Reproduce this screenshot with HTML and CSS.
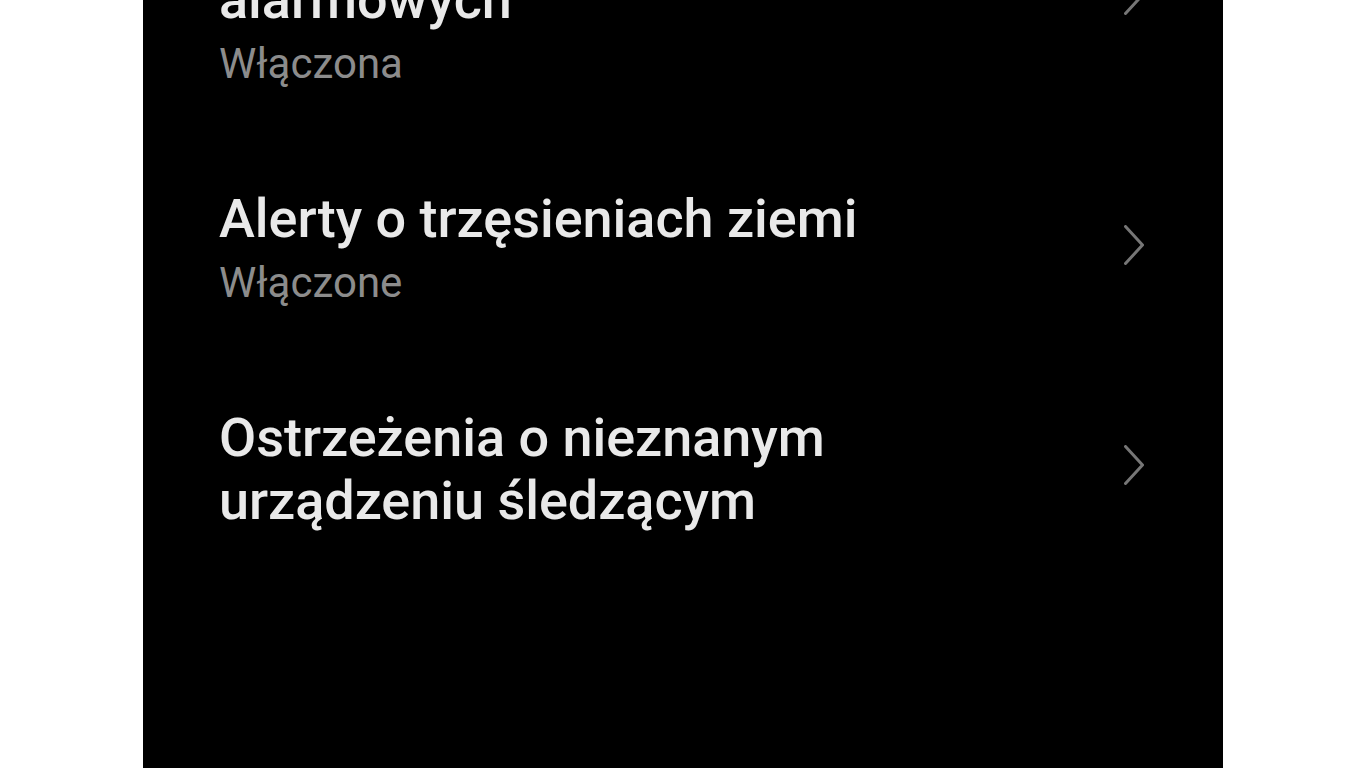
FILE: index.html
```html
<!DOCTYPE html>
<html lang="pl">
<head>
<meta charset="utf-8">
<title>Bezpieczeństwo i sytuacje alarmowe</title>
<link rel="stylesheet" href="styles.css">
</head>
<body>
<main class="panel">
  <ul class="list">
    <li class="row">
      <div class="text">
        <div class="title">Usługa lokalizacji w sytuacjach alarmowych</div>
        <div class="summary">Włączona</div>
      </div>
      <svg class="chev" viewBox="0 0 20 40" aria-hidden="true"><path d="M1.5 1.5 L18.5 20 L1.5 38.5"/></svg>
    </li>
    <li class="row">
      <div class="text">
        <div class="title">Alerty o trzęsieniach ziemi</div>
        <div class="summary">Włączone</div>
      </div>
      <svg class="chev" viewBox="0 0 20 40" aria-hidden="true"><path d="M1.5 1.5 L18.5 20 L1.5 38.5"/></svg>
    </li>
    <li class="row">
      <div class="text">
        <div class="title">Ostrzeżenia o nieznanym urządzeniu śledzącym</div>
      </div>
      <svg class="chev" viewBox="0 0 20 40" aria-hidden="true"><path d="M1.5 1.5 L18.5 20 L1.5 38.5"/></svg>
    </li>
  </ul>
</main>
</body>
</html>
```
FILE: styles.css
```css
html, body {
  margin: 0;
  padding: 0;
  background: #ffffff;
}
body {
  font-family: Roboto, "Noto Sans", "Liberation Sans", sans-serif;
}
.panel {
  width: 1080px;
  height: 768px;
  margin-left: 143px;
  background: #000000;
  overflow: hidden;
}
.list {
  list-style: none;
  margin: -146px 0 0 0;
  padding: 0;
}
.row {
  display: flex;
  align-items: center;
  padding: 51px 79px 44px 76px;
}
.text {
  flex: 1;
  min-width: 0;
}
.title {
  font-size: 54px;
  font-weight: 500;
  line-height: 63px;
  letter-spacing: -0.03px;
  color: #e9e9e9;
}
.summary {
  margin-top: 5px;
  font-size: 42px;
  font-weight: 400;
  line-height: 56px;
  color: #8c8c8c;
}
.chev {
  flex: none;
  width: 20px;
  height: 40px;
  margin-left: 41px;
  margin-bottom: 8px;
}
.chev path {
  fill: none;
  stroke: #767676;
  stroke-width: 3;
  stroke-linecap: round;
  stroke-linejoin: round;
}
```
